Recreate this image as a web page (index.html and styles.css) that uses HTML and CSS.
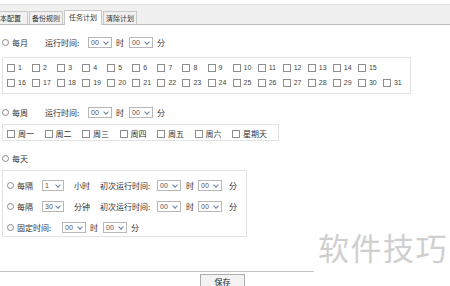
FILE: index.html
```html
<!DOCTYPE html>
<html>
<head>
<meta charset="utf-8">
<link rel="stylesheet" href="styles.css">
</head>
<body>
<div class="page">
  <div class="tabbar">
    <div class="tab first">本配置</div>
    <div class="tab">备份规则</div>
    <div class="tab active">任务计划</div>
    <div class="tab">清除计划</div>
  </div>

  <div class="content">
    <div class="row r-month">
      <span class="radio"></span><span class="lbl">每月</span>
      <span class="lbl run">运行时间:</span>
      <span class="sel">00<i class="arr"></i></span><span class="unit">时</span>
      <span class="sel">00<i class="arr"></i></span><span class="unit">分</span>
    </div>

    <div class="box days">
      <div class="dayrow">
        <span class="cb"><i></i>1</span><span class="cb"><i></i>2</span><span class="cb"><i></i>3</span><span class="cb"><i></i>4</span><span class="cb"><i></i>5</span><span class="cb"><i></i>6</span><span class="cb"><i></i>7</span><span class="cb"><i></i>8</span><span class="cb"><i></i>9</span><span class="cb"><i></i>10</span><span class="cb"><i></i>11</span><span class="cb"><i></i>12</span><span class="cb"><i></i>13</span><span class="cb"><i></i>14</span><span class="cb"><i></i>15</span>
      </div>
      <div class="dayrow">
        <span class="cb"><i></i>16</span><span class="cb"><i></i>17</span><span class="cb"><i></i>18</span><span class="cb"><i></i>19</span><span class="cb"><i></i>20</span><span class="cb"><i></i>21</span><span class="cb"><i></i>22</span><span class="cb"><i></i>23</span><span class="cb"><i></i>24</span><span class="cb"><i></i>25</span><span class="cb"><i></i>26</span><span class="cb"><i></i>27</span><span class="cb"><i></i>28</span><span class="cb"><i></i>29</span><span class="cb"><i></i>30</span><span class="cb"><i></i>31</span>
      </div>
    </div>

    <div class="row r-week">
      <span class="radio"></span><span class="lbl">每周</span>
      <span class="lbl run">运行时间:</span>
      <span class="sel">00<i class="arr"></i></span><span class="unit">时</span>
      <span class="sel">00<i class="arr"></i></span><span class="unit">分</span>
    </div>

    <div class="box week">
      <span class="wk"><i></i>周一</span><span class="wk"><i></i>周二</span><span class="wk"><i></i>周三</span><span class="wk"><i></i>周四</span><span class="wk"><i></i>周五</span><span class="wk"><i></i>周六</span><span class="wk"><i></i>星期天</span>
    </div>

    <div class="row r-day">
      <span class="radio"></span><span class="lbl">每天</span>
    </div>

    <div class="box daily">
      <div class="drow">
        <span class="radio"></span><span class="lbl">每隔</span>
        <span class="sel s1">1<i class="arr"></i></span><span class="unit u-hr">小时</span>
        <span class="lbl first-run">初次运行时间:</span>
        <span class="sel">00<i class="arr"></i></span><span class="unit u-h">时</span>
        <span class="sel">00<i class="arr"></i></span><span class="unit u-m">分</span>
      </div>
      <div class="drow">
        <span class="radio"></span><span class="lbl">每隔</span>
        <span class="sel s1">30<i class="arr"></i></span><span class="unit u-hr">分钟</span>
        <span class="lbl first-run">初次运行时间:</span>
        <span class="sel">00<i class="arr"></i></span><span class="unit u-h">时</span>
        <span class="sel">00<i class="arr"></i></span><span class="unit u-m">分</span>
      </div>
      <div class="drow">
        <span class="radio"></span><span class="lbl fixed">固定时间:</span>
        <span class="sel">00<i class="arr"></i></span><span class="unit">时</span>
        <span class="sel">00<i class="arr"></i></span><span class="unit">分</span>
      </div>
    </div>
  </div>

  <div class="footer">
    <button class="save">保存</button>
  </div>

  <div class="watermark">软件技巧</div>
</div>
</body>
</html>
```

FILE: styles.css
```css
html, body {
  margin: 0;
  padding: 0;
  background: #fff;
}
.page {
  position: relative;
  width: 450px;
  height: 286px;
  overflow: hidden;
  font-family: "Noto Sans CJK SC", "Noto Sans", sans-serif;
  font-size: 8px;
  color: #333;
}
.tabbar {
  margin-top: 4px;
  height: 21px;
  background: #f0f0f0;
  border-top: 1px solid #e6e6e6;
  border-bottom: 1px solid #bcbcbc;
  display: flex;
  align-items: flex-end;
  box-sizing: border-box;
}
.tab {
  height: 12px;
  line-height: 12px;
  padding: 0 2px;
  border: 1px solid #c8c8c8;
  border-bottom: none;
  margin-right: 1px;
  background: #f0f0f0;
  white-space: nowrap;
  font-size: 7px;
}
.tab.first {
  border-left: none;
  padding-left: 0;
  width: 25px;
}
.tab.active {
  height: 14px;
  line-height: 13px;
  background: #fff;
  margin-bottom: -1px;
  padding: 0 4px;
}
.content {
  padding: 11px 0 0 2px;
}
.row {
  display: flex;
  align-items: center;
  height: 12px;
}
.radio {
  width: 7px;
  height: 7px;
  border: 1px solid #8a8a8a;
  border-radius: 50%;
  box-sizing: border-box;
  flex: none;
  margin-right: 3px;
}
.lbl {
  white-space: nowrap;
}
.run {
  margin-left: 17px;
  width: 43px;
}
.sel {
  position: relative;
  width: 24px;
  height: 11px;
  box-sizing: border-box;
  border: 1px solid #b8b8b8;
  font-family: "Liberation Sans", sans-serif;
  font-size: 7px;
  line-height: 9px;
  padding-left: 2px;
  flex: none;
  background: #fff;
  color: #555;
}
.arr {
  position: absolute;
  right: 3px;
  top: 2px;
  width: 3px;
  height: 3px;
  border-right: 1px solid #6b7fa0;
  border-bottom: 1px solid #6b7fa0;
  transform: rotate(45deg);
}
.unit {
  margin: 0 4px 0 4px;
  width: 9px;
}
.box {
  border: 1px solid #e2e2e2;
  box-sizing: border-box;
}
.days {
  margin-top: 9px;
  width: 409px;
  height: 37px;
  padding: 4px 0 0 4px;
}
.dayrow {
  display: flex;
  height: 12px;
  margin-bottom: 3px;
}
.cb, .wk {
  display: inline-flex;
  align-items: center;
  width: 25.07px;
  flex: none;
  font-family: "Liberation Sans", sans-serif;
  font-size: 7px;
  line-height: 12px;
  color: #444;
}
.cb i, .wk i {
  display: block;
  width: 8px;
  height: 8px;
  border: 1px solid #8e8e8e;
  box-sizing: border-box;
  margin-right: 3px;
  flex: none;
}
.r-week {
  margin-top: 12px;
}
.week {
  margin-top: 6px;
  width: 277px;
  height: 17px;
  padding: 2px 0 0 4px;
  display: flex;
}
.wk {
  width: 37.5px;
  font-family: "Noto Sans CJK SC", sans-serif;
  font-size: 8px;
  color: #333;
}
.r-day {
  margin-top: 11px;
}
.daily {
  margin-top: 6px;
  width: 245px;
  height: 67px;
  padding: 7px 0 0 4px;
}
.drow {
  display: flex;
  align-items: center;
  height: 14px;
  margin-bottom: 7px;
}
.s1 {
  margin-left: 9px;
  width: 22px;
}
.u-hr {
  margin-left: 10px;
  width: 17px;
}
.first-run {
  margin-left: 5px;
  width: 57px;
}
.u-h {
  margin-left: 5px;
  margin-right: 3px;
}
.u-m {
  margin-left: 7px;
}
.fixed {
  width: 45px;
}
.footer {
  position: absolute;
  left: 0;
  top: 271px;
  width: 450px;
  height: 15px;
  border-top: 1px solid #c4c4c4;
  background: #fff;
}
.save {
  position: absolute;
  left: 200px;
  top: 2px;
  width: 45px;
  height: 14px;
  padding: 0;
  border: 1px solid #adadad;
  background: #f3f3f3;
  font-family: "Noto Sans CJK SC", sans-serif;
  font-size: 8px;
  line-height: 11px;
  color: #222;
}
.watermark {
  position: absolute;
  left: 314px;
  top: 224px;
  width: 136px;
  height: 62px;
  background: #fff;
  color: #cfcfcf;
  font-family: "Noto Sans CJK SC", sans-serif;
  font-size: 31px;
  line-height: 46px;
  letter-spacing: 1.5px;
  padding-left: 4px;
  box-sizing: border-box;
}
```
